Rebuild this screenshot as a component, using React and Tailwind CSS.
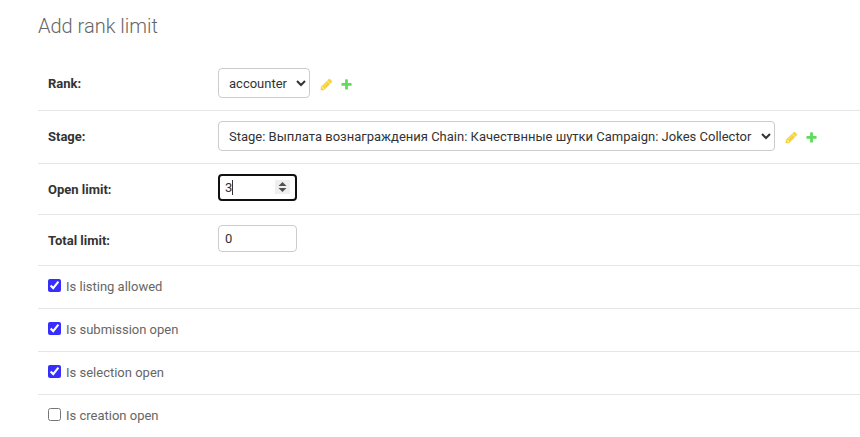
function PencilIcon() {
  return (
    <svg className="size-[13px]" viewBox="0 0 1792 1792" fill="#f6d13a" stroke="#f6d13a" strokeWidth="50">
      <path d="M491 1536l91-91-235-235-91 91v107h128v128h107zm523-928q0-22-22-22-10 0-17 7l-542 542q-7 7-7 17 0 22 22 22 10 0 17-7l542-542q7-7 7-17zm-54-192l416 416-832 832h-416v-416zm683 96q0 53-37 90l-166 166-416-416 166-165q36-38 90-38 53 0 91 38l235 234q37 39 37 91z" />
    </svg>
  );
}

function PlusIcon() {
  return (
    <svg className="size-[13px]" viewBox="0 0 1792 1792" fill="#5fdc5c">
      <path d="M1600 796v192q0 40-28 68t-68 28h-416v416q0 40-28 68t-68 28h-192q-40 0-68-28t-28-68v-416h-416q-40 0-68-28t-28-68v-192q0-40 28-68t68-28h416v-416q0-40 28-68t68-28h192q40 0 68 28t28 68v416h416q40 0 68 28t28 68z" />
    </svg>
  );
}

function Label({ children }) {
  return (
    <div className="w-[170px] shrink-0 text-[13px] leading-[15px] font-bold text-[#333]">
      {children}
    </div>
  );
}

function SelectRow({ label, value, width }) {
  return (
    <div className="flex h-[53px] items-center border-b border-[#e6e6e6] pb-[2px] pl-[10px]">
      <Label>{label}</Label>
      <select
        className={`${width} h-[30px] shrink-0 rounded-[4px] border border-[#ccc] bg-white px-[6px] text-[13px] text-[#333]`}
      >
        <option>{value}</option>
      </select>
      <div className="mt-[3px] ml-[10px] flex gap-[7px]">
        <PencilIcon />
        <PlusIcon />
      </div>
    </div>
  );
}

function CheckRow({ label, checked }) {
  return (
    <div className="flex h-[43px] items-center border-b border-[#e6e6e6] pb-[2px] pl-[10px]">
      <input
        type="checkbox"
        defaultChecked={checked}
        className="mb-[2px] size-[13px] shrink-0 accent-[#352eff]"
      />
      <label className="ml-[5px] text-[13px] leading-[15px] text-[#666]">{label}</label>
    </div>
  );
}

export default function App() {
  return (
    <main className="h-[437px] overflow-hidden bg-white pl-[38px] font-[Roboto,sans-serif]">
      <h1 className="h-[58px] pt-[14px] text-[20px] leading-[24px] font-light text-[#666]">
        Add rank limit
      </h1>
      <SelectRow label="Rank:" value="accounter" width="w-[92px]" />
      <SelectRow
        label="Stage:"
        value="Stage: Выплата вознаграждения Chain: Качествнные шутки Campaign: Jokes Collector"
        width="w-[557px]"
      />
      <div className="flex h-[51px] items-center border-b border-[#e6e6e6] pl-[10px]">
        <Label>Open limit:</Label>
        <div className="mb-[4px] flex h-[27px] w-[79px] items-center rounded-[4px] border-2 border-[#101010] pl-[5px] text-[13px] leading-[15px] text-[#333]">
          <span className="pt-px">3</span>
          <span className="mt-px h-[15px] w-px bg-[#333]" />
          <span className="mr-[5px] ml-auto flex h-[14px] w-[15px] items-center bg-[#efefef] pl-[3px]">
            <svg className="h-[10px] w-[9px]" viewBox="0 0 9 10" fill="#505050">
              <path d="M.5 4L4.5 0L8.5 4ZM.5 6H8.5L4.5 10Z" />
            </svg>
          </span>
        </div>
      </div>
      <div className="flex h-[51px] items-center border-b border-[#e6e6e6] pl-[10px]">
        <Label>Total limit:</Label>
        <div className="mb-[4px] flex h-[27px] w-[79px] items-center rounded-[4px] border border-[#ccc] pt-px pl-[6px] text-[13px] leading-[15px] text-[#333]">
          0
        </div>
      </div>
      <CheckRow label="Is listing allowed" checked />
      <CheckRow label="Is submission open" checked />
      <CheckRow label="Is selection open" checked />
      <CheckRow label="Is creation open" />
    </main>
  );
}
